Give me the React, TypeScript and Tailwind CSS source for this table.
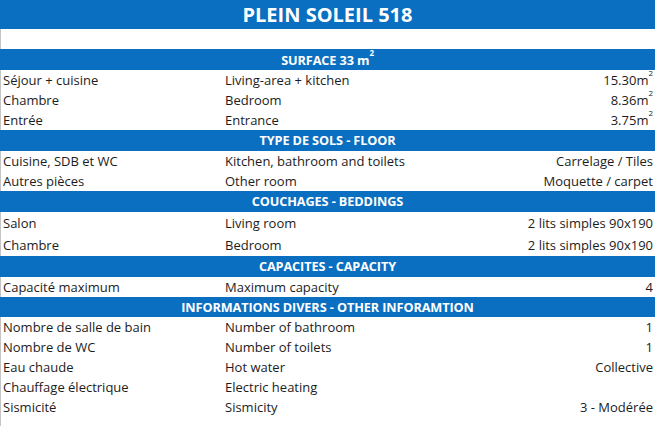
type Row = { fr: string; en: string; value: React.ReactNode; h?: string };

type Section = { title: React.ReactNode; rows: Row[]; h?: string };

const M2 = ({ n }: { n: string }) => (
  <>
    {n}m<sup className="text-[8px] align-super leading-none">2</sup>
  </>
);

const sections: Section[] = [
  {
    title: (
      <>
        SURFACE 33 m<sup className="text-[8px] align-super leading-none">2</sup>
      </>
    ),
    rows: [
      { fr: "Séjour + cuisine", en: "Living-area + kitchen", value: <M2 n="15.30" /> },
      { fr: "Chambre", en: "Bedroom", value: <M2 n="8.36" /> },
      { fr: "Entrée", en: "Entrance", value: <M2 n="3.75" /> },
    ],
  },
  {
    title: "TYPE DE SOLS - FLOOR",
    rows: [
      { fr: "Cuisine, SDB et WC", en: "Kitchen, bathroom and toilets", value: "Carrelage / Tiles" },
      { fr: "Autres pièces", en: "Other room", value: "Moquette / carpet" },
    ],
  },
  {
    title: "COUCHAGES - BEDDINGS",
    rows: [
      { fr: "Salon", en: "Living room", value: "2 lits simples 90x190", h: "h-[22px]" },
      { fr: "Chambre", en: "Bedroom", value: "2 lits simples 90x190", h: "h-[22px]" },
    ],
  },
  {
    title: "CAPACITES - CAPACITY",
    rows: [{ fr: "Capacité maximum", en: "Maximum capacity", value: "4" }],
  },
  {
    title: "INFORMATIONS DIVERS - OTHER INFORAMTION",
    h: "h-[20px]",
    rows: [
      { fr: "Nombre de salle de bain", en: "Number of bathroom", value: "1" },
      { fr: "Nombre de WC", en: "Number of toilets", value: "1" },
      { fr: "Eau chaude", en: "Hot water", value: "Collective" },
      { fr: "Chauffage électrique", en: "Electric heating", value: "" },
      { fr: "Sismicité", en: "Sismicity", value: "3 - Modérée" },
    ],
  },
];

const Header = ({ children, h }: { children: React.ReactNode; h?: string }) => (
  <div
    className={`flex items-center justify-center bg-[#0a6fc0] text-[12.7px] font-bold leading-none tracking-[-0.1px] text-white ${h ?? "h-[21px]"}`}
  >
    <span>{children}</span>
  </div>
);

const DataRow = ({ row }: { row: Row }) => (
  <div
    className={`grid grid-cols-[221px_1fr_auto] items-center border-l border-[#c4c4c4] text-[13px] leading-none text-[#1c1c1c] ${row.h ?? "h-[20px]"}`}
  >
    <span className="pl-[2px]">{row.fr}</span>
    <span className="pl-[3px]">{row.en}</span>
    <span className="pr-[2px] text-right">{row.value}</span>
  </div>
);

export default function App() {
  return (
    <div className="flex h-[426px] w-[655px] flex-col bg-white font-['Open_Sans',sans-serif]">
      <div className="flex h-[29px] items-center justify-center bg-[#0a6fc0] text-[20px] font-bold text-white">
        PLEIN SOLEIL 518
      </div>
      <div className="h-[20px] border-l border-[#c4c4c4]" />
      <div className="flex flex-col">
        {sections.map((s, i) => (
          <div key={i} className="flex flex-col">
            <Header h={s.h}>{s.title}</Header>
            {s.rows.map((r, j) => (
              <DataRow key={j} row={r} />
            ))}
          </div>
        ))}
      </div>
      <div className="flex-1 border-l border-[#c4c4c4]" />
    </div>
  );
}
